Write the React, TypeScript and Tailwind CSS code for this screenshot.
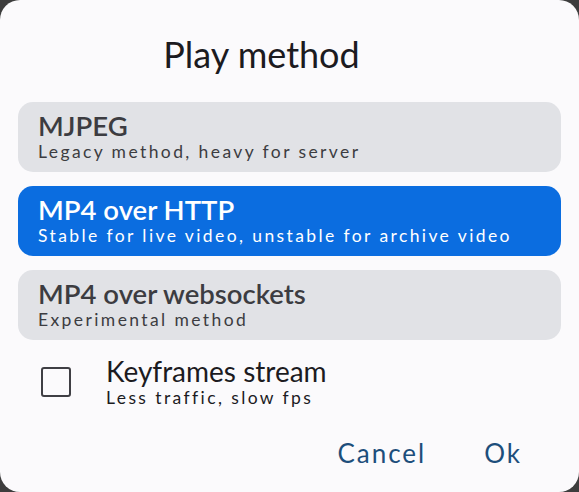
import React, { useState } from 'react';

interface PlayOption {
  id: string;
  title: string;
  subtitle: string;
}

const options: PlayOption[] = [
  { id: 'mjpeg', title: 'MJPEG', subtitle: 'Legacy method, heavy for server' },
  { id: 'mp4http', title: 'MP4 over HTTP', subtitle: 'Stable for live video, unstable for archive video' },
  { id: 'mp4ws', title: 'MP4 over websockets', subtitle: 'Experimental method' },
];

export default function App() {
  const [selected, setSelected] = useState('mp4http');
  const [keyframes, setKeyframes] = useState(false);

  return (
    <div className="w-[579px] h-[492px] bg-[#3d3d3d] font-['Lato',sans-serif]">
      <div className="w-full h-full bg-[#fbfafc] rounded-[20px] flex flex-col px-[18px]">
        {/* Title */}
        <h1 className="text-center text-[36px] leading-none text-[#1c1b1f] pt-[36px] pb-[30px] pr-[56px]">
          Play method
        </h1>

        {/* Options */}
        <div className="flex flex-col gap-[14px]">
          {options.map((opt) => {
            const active = opt.id === selected;
            return (
              <button
                key={opt.id}
                onClick={() => setSelected(opt.id)}
                className={`h-[70px] rounded-[15px] px-[20px] flex flex-col items-start justify-center text-left ${
                  active ? 'bg-[#0b6de0] text-white' : 'bg-[#e1e2e6] text-[#3c3c41]'
                }`}
              >
                <span className="text-[27.5px] font-semibold leading-[30px]">{opt.title}</span>
                <span className="text-[17.5px] leading-[22px] tracking-[2.4px]">{opt.subtitle}</span>
              </button>
            );
          })}
        </div>

        {/* Keyframes checkbox */}
        <label className="flex items-center mt-[16px] cursor-pointer">
          <span className="w-[88px] flex justify-start pl-[23px]">
            <span
              onClick={() => setKeyframes(!keyframes)}
              className={`w-[30px] h-[30px] rounded-[3px] border-[2.5px] border-[#3f3f44] ${
                keyframes ? 'bg-[#0b6de0]' : ''
              }`}
            />
          </span>
          <span className="flex flex-col text-[#1c1b1f]">
            <span className="text-[28px] leading-[31px]">Keyframes stream</span>
            <span className="text-[17.5px] leading-[21px] tracking-[2.4px]">Less traffic, slow fps</span>
          </span>
        </label>

        {/* Actions */}
        <div className="flex justify-end items-center gap-[58px] mt-auto pb-[19px] pr-[39px] text-[26px] tracking-[2px] text-[#1d4e7b]">
          <button>Cancel</button>
          <button>Ok</button>
        </div>
      </div>
    </div>
  );
}
